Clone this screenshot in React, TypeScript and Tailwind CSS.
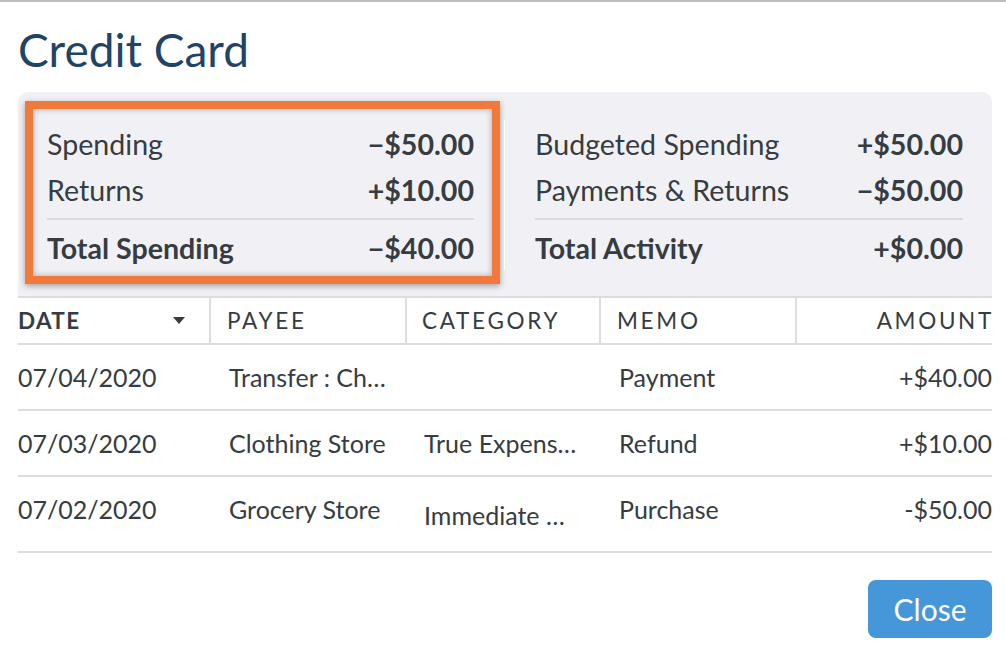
import React from "react";

type Row = {
  date: string;
  payee: string;
  category: string;
  memo: string;
  amount: string;
  tall?: boolean;
};

const rows: Row[] = [
  { date: "07/04/2020", payee: "Transfer : Ch…", category: "", memo: "Payment", amount: "+$40.00" },
  { date: "07/03/2020", payee: "Clothing Store", category: "True Expens…", memo: "Refund", amount: "+$10.00" },
  { date: "07/02/2020", payee: "Grocery Store", category: "Immediate …", memo: "Purchase", amount: "-$50.00", tall: true },
];

function SummaryLine({ label, value, bold }: { label: string; value: string; bold?: boolean }) {
  return (
    <div className={`flex h-[46px] items-center justify-between ${bold ? "font-bold" : ""}`}>
      <span>{label}</span>
      <span className="font-bold">{value}</span>
    </div>
  );
}

export default function App() {
  return (
    <div
      className="w-[1006px] h-[650px] overflow-hidden bg-white border-t-2 border-[#bdbdbd] text-[#363c41]"
      style={{ fontFamily: "Lato, 'Open Sans', sans-serif" }}
    >
      <div className="pl-[18px] pr-[14px]">
        <h1 className="mt-[25px] text-[46px] leading-[46px] text-[#1f4468]">Credit Card</h1>

        {/* summary panel */}
        <div className="mt-[19px] flex items-start rounded-t-[10px] bg-[#f1f1f5] pl-[7px] pt-[9px] pb-[12px] border-b-2 border-[#dcdce1] text-[28.6px]">
          <div className="w-[475px] border-[8px] border-[#f17a3a] bg-[#f1f1f5] pl-[14px] pr-[18px] pt-[12px] pb-[5px] shadow-[0_2px_6px_rgba(0,0,0,0.35),inset_0_0_6px_rgba(0,0,0,0.3)]">
            <SummaryLine label="Spending" value="−$50.00" />
            <SummaryLine label="Returns" value="+$10.00" />
            <div className="my-[5px] h-[2px] bg-[#d9d9de]" />
            <SummaryLine label="Total Spending" value="−$40.00" bold />
          </div>
          <div className="ml-[4px] mt-[19px] h-[150px] w-px bg-white" />
          <div className="ml-[30px] w-[428px] pt-[20px]">
            <SummaryLine label="Budgeted Spending" value="+$50.00" />
            <SummaryLine label="Payments & Returns" value="−$50.00" />
            <div className="my-[5px] h-[2px] bg-[#d9d9de]" />
            <SummaryLine label="Total Activity" value="+$0.00" bold />
          </div>
        </div>

        {/* table */}
        <div className="grid grid-cols-[193px_196px_194px_196px_195px] h-[47px] border-b-2 border-[#dcdce1] text-[22.5px] tracking-[0.12em] uppercase">
          <div className="flex items-center justify-between pr-[24px] font-bold tracking-[0.06em] border-r-2 border-[#dcdce1]">
            <span>Date</span>
            <svg width="12" height="7" viewBox="0 0 12 7" className="fill-[#363c41]">
              <path d="M0 0h12L6 7z" />
            </svg>
          </div>
          <div className="flex items-center pl-[16px] border-r-2 border-[#dcdce1]">Payee</div>
          <div className="flex items-center pl-[15px] border-r-2 border-[#dcdce1]">Category</div>
          <div className="flex items-center pl-[16px] border-r-2 border-[#dcdce1]">Memo</div>
          <div className="flex items-center justify-end -mr-[2px]">Amount</div>
        </div>

        {rows.map((r) => (
          <div
            key={r.date}
            className={`grid grid-cols-[193px_196px_194px_196px_195px] border-b-2 border-[#dcdce1] text-[25px] ${
              r.tall ? "h-[76px] pb-[8px]" : "h-[66px] pt-[2px]"
            }`}
          >
            <div className="flex items-center whitespace-nowrap">{r.date}</div>
            <div className="flex items-center pl-[18px] whitespace-nowrap">{r.payee}</div>
            <div className={`flex items-center pl-[17px] whitespace-nowrap ${r.tall ? "pt-[12px]" : ""}`}>{r.category}</div>
            <div className="flex items-center pl-[18px] whitespace-nowrap">{r.memo}</div>
            <div className="flex items-center justify-end whitespace-nowrap">{r.amount}</div>
          </div>
        ))}

        <div className="mt-[27px] flex justify-end">
          <button className="h-[58px] w-[124px] rounded-[8px] bg-[#4597d9] text-[30px] text-white">
            Close
          </button>
        </div>
      </div>
    </div>
  );
}
